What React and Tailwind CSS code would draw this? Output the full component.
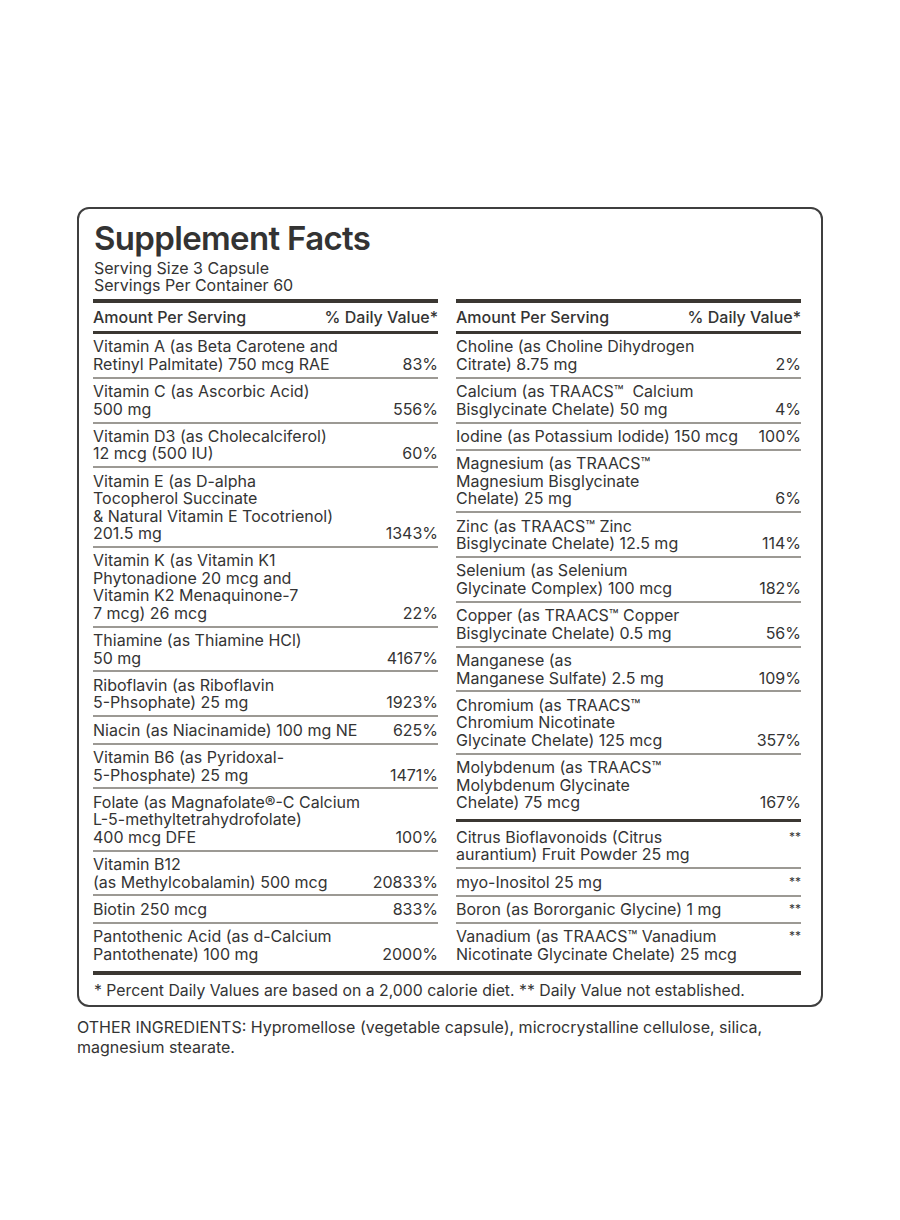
const left = [
  { lines: ['Vitamin A (as Beta Carotene and', 'Retinyl Palmitate) 750 mcg RAE'], dv: '83%' },
  { lines: ['Vitamin C (as Ascorbic Acid)', '500 mg'], dv: '556%' },
  { lines: ['Vitamin D3 (as Cholecalciferol)', '12 mcg (500 IU)'], dv: '60%' },
  { lines: ['Vitamin E (as D-alpha', 'Tocopherol Succinate', '& Natural Vitamin E Tocotrienol)', '201.5 mg'], dv: '1343%' },
  { lines: ['Vitamin K (as Vitamin K1', 'Phytonadione 20 mcg and', 'Vitamin K2 Menaquinone-7', '7 mcg) 26 mcg'], dv: '22%' },
  { lines: ['Thiamine (as Thiamine HCl)', '50 mg'], dv: '4167%' },
  { lines: ['Riboflavin (as Riboflavin', '5-Phsophate) 25 mg'], dv: '1923%' },
  { lines: ['Niacin (as Niacinamide) 100 mg NE'], dv: '625%' },
  { lines: ['Vitamin B6 (as Pyridoxal-', '5-Phosphate) 25 mg'], dv: '1471%' },
  { lines: ['Folate (as Magnafolate®-C Calcium', 'L-5-methyltetrahydrofolate)', '400 mcg DFE'], dv: '100%' },
  { lines: ['Vitamin B12', '(as Methylcobalamin) 500 mcg'], dv: '20833%' },
  { lines: ['Biotin 250 mcg'], dv: '833%' },
  { lines: ['Pantothenic Acid (as d-Calcium', 'Pantothenate) 100 mg'], dv: '2000%' },
];

const right = [
  { lines: ['Choline (as Choline Dihydrogen', 'Citrate) 8.75 mg'], dv: '2%' },
  { lines: ['Calcium (as TRAACS™  Calcium', 'Bisglycinate Chelate) 50 mg'], dv: '4%' },
  { lines: ['Iodine (as Potassium Iodide) 150 mcg'], dv: '100%' },
  { lines: ['Magnesium (as TRAACS™', 'Magnesium Bisglycinate', 'Chelate) 25 mg'], dv: '6%' },
  { lines: ['Zinc (as TRAACS™ Zinc', 'Bisglycinate Chelate) 12.5 mg'], dv: '114%' },
  { lines: ['Selenium (as Selenium', 'Glycinate Complex) 100 mcg'], dv: '182%' },
  { lines: ['Copper (as TRAACS™ Copper', 'Bisglycinate Chelate) 0.5 mg'], dv: '56%' },
  { lines: ['Manganese (as', 'Manganese Sulfate) 2.5 mg'], dv: '109%' },
  { lines: ['Chromium (as TRAACS™', 'Chromium Nicotinate', 'Glycinate Chelate) 125 mcg'], dv: '357%' },
  { lines: ['Molybdenum (as TRAACS™', 'Molybdenum Glycinate', 'Chelate) 75 mcg'], dv: '167%' },
];

const other = [
  { lines: ['Citrus Bioflavonoids (Citrus', 'aurantium) Fruit Powder 25 mg'] },
  { lines: ['myo-Inositol 25 mg'] },
  { lines: ['Boron (as Bororganic Glycine) 1 mg'] },
  { lines: ['Vanadium (as TRAACS™ Vanadium', 'Nicotinate Glycinate Chelate) 25 mcg'] },
];

// rows: top padding a little larger than bottom, thin grey rule between
function Row({ item, last, first }) {
  const stars = !item.dv;
  return (
    <div
      className={`flex justify-between ${first ? 'pt-[6.5px]' : 'pt-[4.5px]'} ${last ? 'pb-[8px]' : 'pb-[3.5px] border-b-2 border-[#9c9994]'} ${stars ? 'items-start' : 'items-end'}`}
    >
      <div>
        {item.lines.map((l, i) => (
          <div key={i} className="whitespace-pre">{l}</div>
        ))}
      </div>
      {stars ? (
        <div className="text-[12px] leading-[14px] pt-[1px]">**</div>
      ) : (
        <div>{item.dv}</div>
      )}
    </div>
  );
}

function Header() {
  return (
    <>
      <div className="h-[4px] bg-[#3b3732]" />
      <div className="flex justify-between font-medium pt-[6px] pb-[4.5px] border-b-[3px] border-[#3b3732]">
        <span>Amount Per Serving</span>
        <span>% Daily Value*</span>
      </div>
    </>
  );
}

export default function App() {
  return (
    <div className="min-h-screen bg-white text-[#343434] font-['Inter',sans-serif] pt-[207px]">
      <div className="w-[746px] mx-auto border-2 border-[#3f3f3f] rounded-[12px] pl-[14px] pr-[20px] pt-[10px] pb-[6.5px]">
        <h1 className="text-[33px] leading-[38px] font-semibold tracking-[-0.02em] text-[#333] pl-[1px]">
          Supplement Facts
        </h1>
        <div className="text-[16px] leading-[17px] mt-[3px] pl-[1px]">
          <div>Serving Size 3 Capsule</div>
          <div>Servings Per Container 60</div>
        </div>

        <div className="grid grid-cols-2 gap-x-[18px] mt-[5px] text-[16px] leading-[17.4px]">
          <div>
            <Header />
            {left.map((it, i) => (
              <Row key={i} item={it} last={i === left.length - 1} />
            ))}
          </div>
          <div>
            <Header />
            {right.map((it, i) => (
              <Row key={i} item={it} last={i === right.length - 1} />
            ))}
            <div className="h-[3px] bg-[#3b3732]" />
            {other.map((it, i) => (
              <Row key={i} item={it} first={i === 0} last={i === other.length - 1} />
            ))}
          </div>
        </div>

        <div className="h-[4px] bg-[#3b3732]" />
        <p className="text-[15.8px] leading-[17px] pt-[6.5px] pl-[1px]">
          * Percent Daily Values are based on a 2,000 calorie diet. ** Daily Value not established.
        </p>
      </div>

      <p className="w-[746px] mx-auto mt-[10px] text-[16px] leading-[20px]">
        OTHER INGREDIENTS: Hypromellose (vegetable capsule), microcrystalline cellulose, silica,
        <br />
        magnesium stearate.
      </p>
    </div>
  );
}
